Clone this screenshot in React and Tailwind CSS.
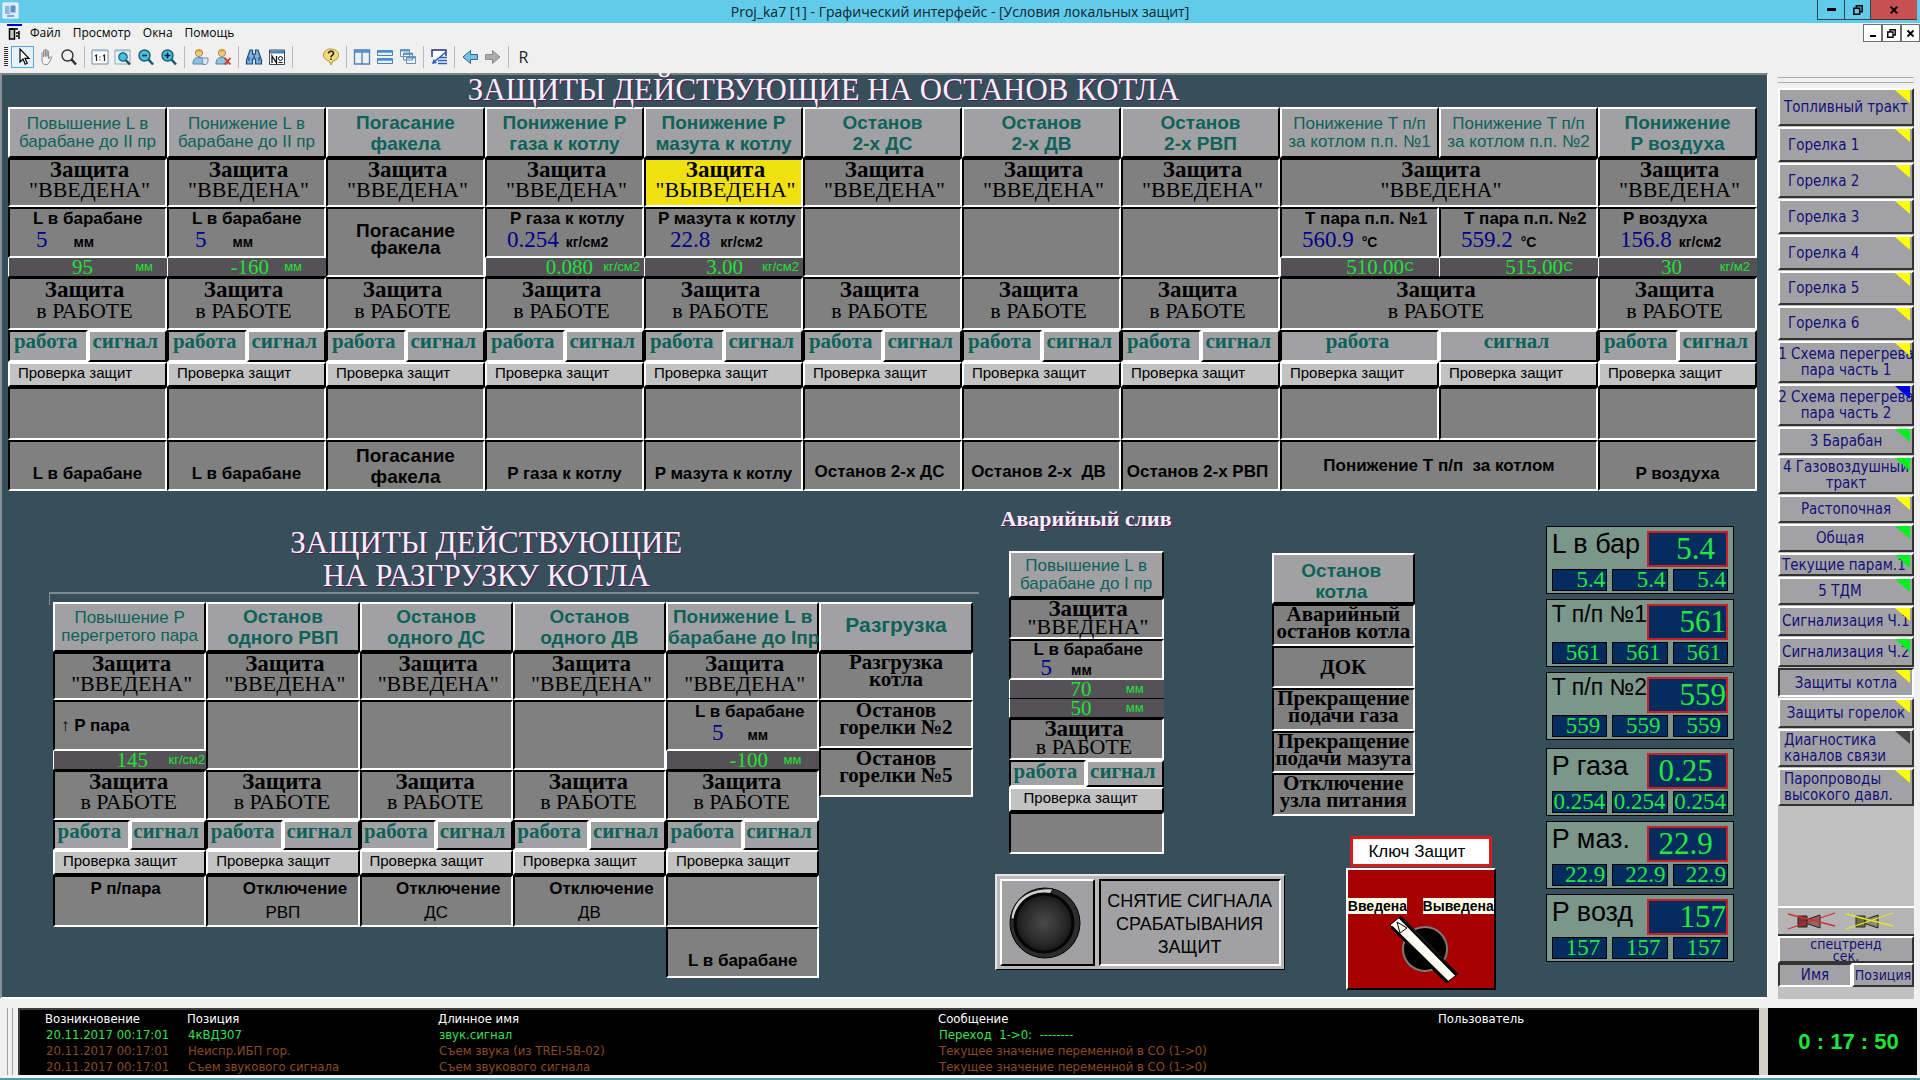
import React, { useState } from "react";

const SANS = "[font-family:'Liberation_Sans',Arial,sans-serif]";
const SERIF = "[font-family:'Liberation_Serif','Times_New_Roman',serif]";
const TAHOMA = "[font-family:'DejaVu_Sans_Condensed','DejaVu_Sans',sans-serif]";
const SEGOE = "[font-family:'Open_Sans','Noto_Sans',sans-serif]";

const SUNK =
  "border-2 border-t-black border-l-black border-b-white border-r-white bg-[#808080]";
const RAISED =
  "border-2 border-t-white border-l-white border-b-black border-r-black bg-[#a1a1a3]";
const TITLE =
  "text-[#f6effa] [text-shadow:1px_1px_0_#5c1450] whitespace-nowrap";

const stopColumns = [
  {
    head: "Повышение L в\nбарабане до II пр",
    small: true,
    name: "L в барабане",
    value: "5",
    unit: "мм",
    gap: "gap-[26px] pl-[26px]",
    set: "95",
    setEnd: "w-[84px]",
    setUnit: "мм",
    setPad: "pr-[14px]",
    foot: "L в барабане",
  },
  {
    head: "Понижение L в\nбарабане до II пр",
    small: true,
    name: "L в барабане",
    value: "5",
    unit: "мм",
    gap: "gap-[26px] pl-[26px]",
    set: "-160",
    setEnd: "w-[101px]",
    setUnit: "мм",
    setPad: "pr-[24px]",
    foot: "L в барабане",
  },
  { head: "Погасание\nфакела", label: "Погасание\nфакела" },
  {
    head: "Понижение P\nгаза к котлу",
    name: "P газа к котлу",
    value: "0.254",
    unit: "кг/см2",
    gap: "gap-[7px] pl-5",
    set: "0.080",
    setEnd: "w-[107px]",
    setUnit: "кг/см2",
    setPad: "pr-[4px]",
    foot: "P газа к котлу",
  },
  {
    head: "Понижение P\nмазута к котлу",
    off: true,
    name: "P мазута к котлу",
    long: true,
    value: "22.8",
    unit: "кг/см2",
    gap: "gap-[10px] pl-[24px]",
    set: "3.00",
    setEnd: "w-[98px]",
    setUnit: "кг/см2",
    setPad: "pr-[4px]",
    foot: "P мазута к котлу",
  },
  { head: "Останов\n2-х ДС", foot: "Останов 2-х ДС" },
  { head: "Останов\n2-х ДВ", foot: "Останов 2-х  ДВ" },
  { head: "Останов\n2-х РВП", foot: "Останов 2-х РВП" },
  {
    head: "Понижение T п/п\nза котлом п.п. №1",
    small: true,
    wide: true,
    name: "T пара п.п. №1",
    value: "560.9",
    unit: "°C",
    gap: "gap-[8px] pl-5",
    set: "510.00",
    setEnd: "w-[123px]",
    setUnit: "C",
    setPad: "pr-[25px]",
  },
  {
    head: "Понижение T п/п\nза котлом п.п. №2",
    small: true,
    wide: true,
    name: "T пара п.п. №2",
    value: "559.2",
    unit: "°C",
    gap: "gap-[8px] pl-5",
    set: "515.00",
    setEnd: "w-[123px]",
    setUnit: "C",
    setPad: "pr-[25px]",
  },
  {
    head: "Понижение\nP воздуха",
    name: "P воздуха",
    value: "156.8",
    unit: "кг/см2",
    gap: "gap-[7px] pl-5",
    set: "30",
    setEnd: "w-[83px]",
    setUnit: "кг/м2",
    setPad: "pr-[7px]",
    foot: "P воздуха",
  },
];

const unloadColumns = [
  { head: "Повышение P\nперегретого пара", small: true, foot: ["P п/пара"] },
  { head: "Останов\nодного РВП", foot: ["Отключение", "РВП"] },
  { head: "Останов\nодного ДС", foot: ["Отключение", "ДС"] },
  { head: "Останов\nодного ДВ", foot: ["Отключение", "ДВ"] },
  { head: "Понижение L в\nбарабане до Iпр", foot: null },
];

const meters = [
  { label: "L в бар", value: "5.4", pos: "justify-center pl-4", parts: "5.4" },
  { label: "T п/п №1", small: true, value: "561", pos: "justify-end", parts: "561", pad: true },
  { label: "T п/п №2", small: true, value: "559", pos: "justify-end", parts: "559", pad: true },
  { label: "P газа", value: "0.25", pos: "justify-center pr-1", parts: "0.254", first: true },
  { label: "P маз.", value: "22.9", pos: "justify-center pr-1", parts: "22.9" },
  { label: "P возд", value: "157", pos: "justify-end", parts: "157", pad: true },
];

const YELLOW = "bg-[#ffff00]";
const GREEN = "bg-[#00f020]";
const BLUE = "bg-[#0000e0]";
const DARK = "bg-[#444444]";

const LEFT = "items-start pl-2";
const TIGHT = "items-start pl-[2px]";
const OFFSET = "items-center pr-3";

const screens = [
  { text: "Топливный тракт", h: "h-[38px]", flag: YELLOW },
  { text: "Горелка 1", h: "h-[35px]", flag: YELLOW, align: LEFT },
  { text: "Горелка 2", h: "h-[35px]", flag: YELLOW, align: LEFT },
  { text: "Горелка 3", h: "h-[35px]", flag: YELLOW, align: LEFT },
  { text: "Горелка 4", h: "h-[35px]", flag: YELLOW, align: LEFT },
  { text: "Горелка 5", h: "h-[34px]", flag: YELLOW, align: LEFT },
  { text: "Горелка 6", h: "h-[34px]", flag: YELLOW, align: LEFT },
  { text: "1 Схема перегрева\nпара часть 1", h: "h-[42px]", flag: YELLOW },
  { text: "2 Схема перегрева\nпара часть 2", h: "h-[42px]", flag: BLUE },
  { text: "3 Барабан", h: "h-[28px]", flag: GREEN },
  { text: "4 Газовоздушный\nтракт", h: "h-[38px]", flag: GREEN },
  { text: "Растопочная", h: "h-[28px]", flag: YELLOW },
  { text: "Общая", h: "h-[28px]", flag: GREEN, align: OFFSET },
  { text: "Текущие парам.1", h: "h-[23px]", flag: GREEN, align: TIGHT },
  { text: "5 ТДМ", h: "h-[28px]", flag: GREEN, align: OFFSET },
  { text: "Сигнализация Ч.1", h: "h-[30px]", flag: YELLOW, align: TIGHT },
  { text: "Сигнализация Ч.2", h: "h-[30px]", flag: GREEN, align: TIGHT },
  { text: "Защиты котла", h: "h-[29px]", flag: YELLOW },
  { text: "Защиты горелок", h: "h-[30px]", flag: YELLOW },
  { text: "Диагностика\nканалов связи", h: "h-[38px]", flag: DARK, align: "items-start pl-1 text-left" },
  { text: "Паропроводы\nвысокого давл.", h: "h-[38px]", flag: YELLOW, align: "items-start pl-1 text-left" },
];

const events = [
  {
    color: "text-[#35e04a]",
    cells: ["20.11.2017 00:17:01", "4кВД307", "звук.сигнал", "Переход  1->0:  --------"],
  },
  {
    color: "text-[#8a4a26]",
    cells: [
      "20.11.2017 00:17:01",
      "Неиспр.ИБП гор.",
      "Съем звука (из TREI-5B-02)",
      "Текущее значение переменной в СО (1->0)",
    ],
  },
  {
    color: "text-[#8a4a26]",
    cells: [
      "20.11.2017 00:17:01",
      "Съем звукового сигнала",
      "Съем звукового сигнала",
      "Текущее значение переменной в СО (1->0)",
    ],
  },
];

/* ---------- icons ---------- */

const Svg = ({ children, size = 18 }) => (
  <svg width={size} height={size} viewBox="0 0 18 18" fill="none" aria-hidden="true">
    {children}
  </svg>
);

const CursorIcon = () => (
  <Svg>
    <path d="M6 1v13l3-3 2.2 5.2 2-.9L11 10.3h4z" fill="#fff" stroke="#000" strokeWidth="1.2" />
  </Svg>
);
const HandIcon = () => (
  <Svg>
    <path
      d="M5 11V5.5c0-1.2 1.6-1.2 1.6 0V9 3c0-1.3 1.7-1.3 1.7 0v5.5V2.3c0-1.3 1.7-1.3 1.7 0v6.2V3.6c0-1.2 1.6-1.2 1.6 0V11l1.5-2c.8-1 2 0 1.5 1l-2.4 4.5c-.6 1.3-1.6 2.2-3.2 2.2-3 0-4-1.7-4-5.7z"
      fill="#f4f4f4"
      stroke="#8c8c8c"
    />
  </Svg>
);
const LensIcon = ({ fill = "none", color = "#333", children }) => (
  <Svg>
    <circle cx="7.5" cy="7.5" r="5.5" fill={fill} stroke={color} strokeWidth="1.4" />
    <path d="M11.5 11.5 16 16.5" stroke={color} strokeWidth="2.6" />
    {children}
  </Svg>
);
const OneToOneIcon = () => (
  <Svg>
    <path d="M1 2h16v14H1z" fill="#fff" stroke="#7c8a90" />
    <path d="M1 2.5h16" stroke="#9fc4d8" strokeWidth="2" />
    <path d="M4 8l1.5-1v6M12 8l1.5-1v6M9 8.5v1M9 11.5v1" stroke="#222" strokeWidth="1.2" />
  </Svg>
);
const FitIcon = () => (
  <Svg>
    <path d="M1 2h15v14H1z" fill="#e9f3f6" stroke="#8fa9b0" />
    <path d="M1 2.5h15" stroke="#9fc4d8" strokeWidth="2" />
    <circle cx="9" cy="9" r="4.2" fill="#46c0e0" stroke="#1f5a70" strokeWidth="1.2" />
    <path d="M12 12.5l4 4" stroke="#1f4858" strokeWidth="2.4" />
  </Svg>
);
const UserIcon = ({ removed }) => (
  <Svg>
    <circle cx="8" cy="5" r="3.6" fill="#efc98b" stroke="#b98a3e" />
    <path d="M4.5 4.5C5 0 11 0 11.5 4.5 9.5 3 7 3 4.5 4.5z" fill="#d9a441" />
    <path d="M2 16c0-5 2-6.5 6-6.5s6 1.5 6 6.5z" fill="#8fc3dd" stroke="#4d87a8" />
    {removed ? (
      <path d="M10.5 10l6 6.5M16.5 10l-6 6.5" stroke="#d8342a" strokeWidth="1.8" />
    ) : (
      <path d="M11 10h6v4l-2 2.5h-3z" fill="#d6e6f2" stroke="#6c8fb0" />
    )}
  </Svg>
);
const BinocularsIcon = () => (
  <Svg>
    <path
      d="M5 2h2.5v4h3V2H13l3.500 10v4h-6v-5h-3v5h-6v-4z"
      fill="#7fb0d8"
      stroke="#1d4b80"
      strokeWidth="1.2"
    />
    <path d="M4 9v4M14 9v4M9 6v5" stroke="#1d4b80" strokeWidth="1.2" />
  </Svg>
);
const NumberIcon = () => (
  <Svg>
    <path d="M1.5 2h15v14.5h-15z" fill="#fff" stroke="#3a4a58" />
    <path d="M2 4h14" stroke="#4c82b0" strokeWidth="3" />
    <path d="M4 15V8l4.5 7V8" stroke="#111" strokeWidth="1.3" />
    <circle cx="12.5" cy="10.5" r="2" stroke="#111" />
    <path d="M10.5 14.5h4" stroke="#111" />
  </Svg>
);
const HelpIcon = () => (
  <Svg>
    <path
      d="M9 1C4.5 1 1.5 3.5 1.5 7c0 3.5 3 5.5 5.5 6l2 4 2-4c3-.5 5.5-2.500 5.500-6 0-3.500-3-6-7.500-6z"
      fill="#f2dc7c"
      stroke="#b0973c"
    />
    <path
      d="M6.5 5.5C6.5 2.5 11.5 2.7 11.5 5.5 11.5 7.5 9 7.3 9 9.2M9 10.5v1.5"
      stroke="#222"
      strokeWidth="1.6"
    />
  </Svg>
);
const ColumnsIcon = () => (
  <Svg>
    <path d="M1.5 2h15v14h-15zM9 2v14" fill="#eaf3fb" stroke="#4f7fae" strokeWidth="1.3" />
    <path d="M1.5 3.5h15" stroke="#4f8fd0" strokeWidth="2.5" />
  </Svg>
);
const RowsIcon = () => (
  <Svg>
    <path d="M1.5 2.5h15v5h-15zM1.5 10.5h15v5h-15z" fill="#eaf3fb" stroke="#4f7fae" />
    <path d="M1.5 3.5h15M1.5 11.5h15" stroke="#4f8fd0" strokeWidth="2.5" />
  </Svg>
);
const CascadeIcon = () => (
  <Svg>
    <path
      d="M1.5 1.5h9v7h-9zM4.500 5h9v7h-9zM7.500 8.500h9v7h-9z"
      fill="#f4f9fd"
      stroke="#6f8fae"
    />
    <path d="M1.5 2.5h9M4.5 6h9M7.5 9.5h9" stroke="#5a96d0" strokeWidth="2" />
  </Svg>
);
const SwapIcon = () => (
  <Svg>
    <path d="M2 9V2h14v6" fill="#fff" stroke="#1c2e70" strokeWidth="1.4" />
    <path d="M16 4 4 14" stroke="#2a5fc0" strokeWidth="1.6" />
    <path d="M2 16l1.500-5 3.500 4z" fill="#2a5fc0" />
    <path d="M10 9.500h7M8 12.500h9M8 15.500h9" stroke="#2a5fc0" strokeWidth="1.600" />
  </Svg>
);
const ArrowIcon = ({ forward }) => (
  <Svg>
    {forward ? (
      <path d="M1.5 6.5h7v-4L16 9l-7.5 6.5v-4h-7z" fill="#ababab" stroke="#8a8a8a" />
    ) : (
      <path d="M16.5 6.5h-7v-4L2 9l7.5 6.5v-4h7z" fill="#78bfe6" stroke="#2c6a98" />
    )}
  </Svg>
);
const AppIcon = () => (
  <Svg>
    <path d="M1 1h15v15H1z" fill="#dcebf5" stroke="#f4f8fb" />
    <path d="M3 4h6v8H3z" fill="#8fb6dc" />
    <path d="M8 3h6v8H8z" fill="#5b92cc" stroke="#e8f2fa" />
    <path d="M5 14h7" stroke="#7ea6cc" strokeWidth="2" />
  </Svg>
);
const DocIcon = () => (
  <svg width="16" height="18" viewBox="0 0 16 18" fill="none" aria-hidden="true">
    <path d="M0 1h15" stroke="#0000c0" strokeWidth="2" />
    <path d="M2.5 5v10h5V5z" fill="#c8c8c8" stroke="#000" strokeWidth="1.5" />
    <path d="M2 5h9M9 9h3V7M12 9v6M9 12h2" stroke="#000" strokeWidth="1.5" />
  </svg>
);

const MinGlyph = () => <span className="block h-[3px] w-[9px] bg-black" />;
const RestoreGlyph = ({ size }) => (
  <svg
    width={size}
    height={size}
    viewBox="0 0 12 12"
    fill="none"
    stroke="#000"
    strokeWidth="1.8"
    aria-hidden="true"
  >
    <path d="M1 4h7v7H1zM4 3.5V1h7v7H8.5" />
  </svg>
);
const CloseGlyph = ({ size }) => (
  <svg
    width={size}
    height={size}
    viewBox="0 0 12 12"
    stroke="#000"
    strokeWidth="2.4"
    aria-hidden="true"
  >
    <path d="M2 2l8 8M10 2l-8 8" />
  </svg>
);

const SirenIcon = ({ body, cross }) => (
  <svg width="50" height="18" viewBox="0 0 50 18" fill="none" aria-hidden="true">
    <path d="M11 4h9v11h-9z" fill={body} stroke="#222" />
    <path d="M20 7.5 33 3v13l-13-4.5z" fill={body} fillOpacity="0.6" stroke="#222" />
    <path d="M1 2 48 14M1 17 48 1" stroke={cross} strokeWidth="1.3" />
  </svg>
);

/* ---------- table pieces ---------- */

const Guard = ({ state, leading = "leading-[20px]", pad = "" }) => (
  <div className={`${leading} ${pad}`}>
    <div className="text-[23px] font-bold">Защита</div>
    <div className="text-[22px]">{state}</div>
  </div>
);

const HeadText = ({ text, small }) => (
  <div
    className={
      small
        ? "text-[17px] leading-[18px] font-normal whitespace-pre text-[#0e625a]"
        : "text-[19px] leading-[21px] font-bold whitespace-pre text-[#0e625a]"
    }
  >
    {text}
  </div>
);

const Reading = ({ col, tight }) => (
  <div className={`${SANS} text-left whitespace-nowrap`}>
    <div
      className={`text-[17px] font-bold ${tight ? "leading-[18px]" : "leading-[19px]"} ${
        col.long ? "pl-[12px]" : "pl-[23px]"
      }`}
    >
      {col.name}
    </div>
    <div className={`flex items-baseline ${col.gap}`}>
      <span
        className={`${SERIF} text-[23px] text-[#00008c] ${tight ? "leading-[18px]" : "leading-[24px]"}`}
      >
        {col.value}
      </span>
      <span className={`text-[14px] font-bold ${tight ? "leading-[16px]" : "leading-[24px]"}`}>
        {col.unit}
      </span>
    </div>
  </div>
);

const Setpoint = ({ col }) => (
  <div
    className={`flex h-[19px] items-center border-b border-l border-b-black border-l-white bg-[#545256] text-[#22e038] ${col.setPad}`}
  >
    <span className={`${SERIF} shrink-0 text-right text-[21px] leading-[18px] ${col.setEnd}`}>
      {col.set}
    </span>
    <span className={`${SANS} ml-auto text-[13px] leading-[18px]`}>{col.setUnit}</span>
  </div>
);

const ModeButton = ({ children, pressed, onClick, h }) => (
  <button
    type="button"
    aria-pressed={pressed}
    onClick={onClick}
    className={`${SERIF} ${h} flex w-full justify-center border-2 bg-[#a1a1a3] pr-1 text-[21px] leading-[18px] font-bold text-[#0e625a] ${
      pressed
        ? "border-t-black border-l-black border-b-white border-r-white"
        : "border-t-white border-l-white border-b-black border-r-black"
    }`}
  >
    {children}
  </button>
);

const ModePair = ({ h }) => {
  const [mode, setMode] = useState("work");
  return (
    <div className="grid grid-cols-2">
      <ModeButton h={h} pressed={mode === "work"} onClick={() => setMode("work")}>
        работа
      </ModeButton>
      <ModeButton h={h} pressed={mode === "signal"} onClick={() => setMode("signal")}>
        сигнал
      </ModeButton>
    </div>
  );
};

const CheckButton = ({ pad = "pl-[8px]" }) => (
  <button
    type="button"
    className={`${SANS} ${pad} block h-[25px] w-full border-2 border-t-white border-l-white border-b-black border-r-black bg-[#c2c2c2] pb-[3px] text-left text-[15px] leading-[18px] text-black`}
  >
    Проверка защит
  </button>
);

const StopTable = () => (
  <table
    className={`${SERIF} w-full table-fixed border-separate border-spacing-0 text-center text-black`}
  >
    <thead>
      <tr>
        {stopColumns.map((col, i) => (
          <th key={i} scope="col" className={`${RAISED} ${SANS} h-[51px] p-0`}>
            <HeadText text={col.head} small={col.small} />
          </th>
        ))}
      </tr>
    </thead>
    <tbody>
      <tr>
        {stopColumns.map((col, i) =>
          i === 9 ? null : (
            <td
              key={i}
              colSpan={col.wide ? 2 : 1}
              className={
                col.off
                  ? "h-[49px] border-2 border-t-black border-l-black border-r-white border-b-white bg-[#f0e010] p-0 align-top"
                  : `${SUNK} h-[49px] p-0 align-top`
              }
            >
              <Guard state={col.off ? '"ВЫВЕДЕНА"' : '"ВВЕДЕНА"'} pad="pl-[4px]" />
            </td>
          )
        )}
      </tr>
      <tr>
        {stopColumns.map((col, i) => (
          <td
            key={i}
            rowSpan={col.name ? 1 : 2}
            className={`${SUNK} h-[51px] p-0 ${col.name ? "align-top" : "align-middle"}`}
          >
            {col.name && <Reading col={col} />}
            {col.label && (
              <div className={`${SANS} pb-1.5 text-[19px] leading-[17px] font-bold whitespace-pre`}>
                {col.label}
              </div>
            )}
          </td>
        ))}
      </tr>
      <tr>
        {stopColumns
          .filter((col) => col.name)
          .map((col, i) => (
            <td key={i} className="p-0">
              <Setpoint col={col} />
            </td>
          ))}
      </tr>
      <tr>
        {stopColumns.map((col, i) =>
          i === 9 ? null : (
            <td key={i} colSpan={col.wide ? 2 : 1} className={`${SUNK} h-[53px] p-0 align-top`}>
              <Guard state="в РАБОТЕ" leading="leading-[21px]" pad="pr-[6px]" />
            </td>
          )
        )}
      </tr>
      <tr>
        {stopColumns.map((col, i) => (
          <td key={i} className="p-0">
            {col.wide ? (
              <ModeButton h="h-[32px]" pressed={i === 8}>
                {i === 8 ? "работа" : "сигнал"}
              </ModeButton>
            ) : (
              <ModePair h="h-[32px]" />
            )}
          </td>
        ))}
      </tr>
      <tr>
        {stopColumns.map((col, i) => (
          <td key={i} className="p-0">
            <CheckButton />
          </td>
        ))}
      </tr>
      <tr>
        {stopColumns.map((col, i) => (
          <td key={i} className={`${SUNK} h-[53px] p-0`} />
        ))}
      </tr>
      <tr className={`${SANS} text-[17px] font-bold whitespace-pre`}>
        {stopColumns.map((col, i) => {
          if (i === 9) return null;
          if (col.wide)
            return (
              <td key={i} colSpan={2} className={`${SUNK} h-[51px] p-0`}>
                Понижение T п/п  за котлом
              </td>
            );
          if (col.label)
            return (
              <td key={i} className={`${SUNK} h-[51px] p-0 text-[19px] leading-[21px]`}>
                {col.label}
              </td>
            );
          return (
            <td key={i} className={`${SUNK} h-[51px] p-0 ${col.name ? "pt-4" : "pt-3 pr-1.5"}`}>
              {col.foot}
            </td>
          );
        })}
      </tr>
    </tbody>
  </table>
);

const unloadSteam = { set: "145", setEnd: "w-[94px]", setUnit: "кг/см2", setPad: "pr-px" };
const unloadLevel = {
  name: "L в барабане",
  value: "5",
  unit: "мм",
  gap: "gap-[24px] pl-[40px]",
  set: "-100",
  setEnd: "w-[101px]",
  setUnit: "мм",
  setPad: "pr-[18px]",
};

const UnloadTable = () => (
  <table
    className={`${SERIF} w-full table-fixed border-separate border-spacing-0 text-center text-black`}
  >
    <thead>
      <tr>
        {unloadColumns.map((col, i) => (
          <th key={i} scope="col" className={`${RAISED} ${SANS} h-[50px] p-0`}>
            <HeadText text={col.head} small={col.small} />
          </th>
        ))}
      </tr>
    </thead>
    <tbody>
      <tr>
        {unloadColumns.map((col, i) => (
          <td key={i} className={`${SUNK} h-[48px] p-0 align-top`}>
            <Guard state={'"ВВЕДЕНА"'} pad="pl-[4px]" />
          </td>
        ))}
      </tr>
      <tr>
        <td className={`${SUNK} ${SANS} h-[51px] p-0 pl-1.5 text-left text-[17px] font-bold`}>
          <span className="font-normal">↑</span> P пара
        </td>
        <td rowSpan={2} className={`${SUNK} p-0`} />
        <td rowSpan={2} className={`${SUNK} p-0`} />
        <td rowSpan={2} className={`${SUNK} p-0`} />
        <td className={`${SUNK} h-[51px] p-0 pl-1 align-top`}>
          <Reading col={unloadLevel} />
        </td>
      </tr>
      <tr>
        <td className="p-0">
          <Setpoint col={unloadSteam} />
        </td>
        <td className="p-0">
          <Setpoint col={unloadLevel} />
        </td>
      </tr>
      <tr>
        {unloadColumns.map((col, i) => (
          <td key={i} className={`${SUNK} h-[50px] p-0 align-top`}>
            <Guard state="в РАБОТЕ" pad="pr-[2px]" />
          </td>
        ))}
      </tr>
      <tr>
        {unloadColumns.map((col, i) => (
          <td key={i} className="p-0">
            <ModePair h="h-[30px]" />
          </td>
        ))}
      </tr>
      <tr>
        {unloadColumns.map((col, i) => (
          <td key={i} className="p-0">
            <CheckButton />
          </td>
        ))}
      </tr>
      <tr className={`${SANS} text-[17px] leading-[24px] font-bold`}>
        {unloadColumns.map((col, i) => (
          <td key={i} className={`${SUNK} h-[52px] p-0 align-top`}>
            {col.foot && <div className={i === 0 ? "pr-2" : "pl-6"}>{col.foot[0]}</div>}
            {col.foot && <div className="font-normal">{col.foot[1]}</div>}
          </td>
        ))}
      </tr>
      <tr className={`${SANS} text-[17px] font-bold`}>
        <td colSpan={4} className="p-0" />
        <td className={`${SUNK} h-[51px] p-0 pt-4`}>L в барабане</td>
      </tr>
    </tbody>
  </table>
);

const ListCell = ({ text, h, align = "items-start" }) => (
  <li
    className={`${SUNK} ${SERIF} ${h} ${align} flex justify-center text-center text-[21px] leading-[17px] font-bold whitespace-pre text-black`}
  >
    {text}
  </li>
);

const drainLevel = {
  name: "L в барабане",
  value: "5",
  unit: "мм",
  gap: "gap-[19px] pl-[30px]",
};

const DrainColumn = () => (
  <section className="flex w-[155px] flex-col items-center pt-4">
    <h2 className={`${SERIF} ${TITLE} mb-5 text-[22px] leading-[24px] font-bold`}>
      Аварийный слив
    </h2>
    <div className={`${SERIF} w-full text-center text-black`}>
      <div className={`${RAISED} ${SANS} flex h-[47px] items-center justify-center`}>
        <HeadText text={"Повышение L в\nбарабане до I пр"} small />
      </div>
      <div className={`${SUNK} h-[41px]`}>
        <Guard state={'"ВВЕДЕНА"'} leading="leading-[18px]" pad="pl-[4px]" />
      </div>
      <div className={`${SUNK} h-[41px]`}>
        <Reading col={drainLevel} tight />
      </div>
      {["70", "50"].map((v) => (
        <Setpoint
          key={v}
          col={{ set: v, setEnd: "w-[82px]", setUnit: "мм", setPad: "pr-[20px]" }}
        />
      ))}
      <div className={`${SUNK} h-[42px]`}>
        <Guard state="в РАБОТЕ" leading="leading-[18px]" pad="pr-[4px]" />
      </div>
      <ModePair h="h-[27px]" />
      <CheckButton pad="pl-[13px]" />
      <div className={`${SUNK} h-[42px]`} />
    </div>
  </section>
);

const BoilerStopColumn = () => (
  <section className="w-[143px] pt-[62px]">
    <h2
      className={`${RAISED} ${SANS} flex h-[51px] items-center justify-center pt-1 pr-1 text-center`}
    >
      <HeadText text={"Останов\nкотла"} />
    </h2>
    <ul>
      <ListCell h="h-[42px]" text={"Аварийный\nостанов котла"} />
      <ListCell h="h-[42px]" align="items-center" text="ДОК" />
      <ListCell h="h-[43px]" text={"Прекращение\nподачи газа"} />
      <ListCell h="h-[42px]" text={"Прекращение\nподачи мазута"} />
      <ListCell h="h-[43px]" text={"Отключение\nузла питания"} />
    </ul>
  </section>
);

const ResetButton = () => (
  <button
    type="button"
    className="flex h-[96px] w-[290px] gap-1 border-t-2 border-r border-b border-l-2 border-t-[#e4e4e4] border-l-[#e4e4e4] border-r-black border-b-black bg-[#b9b9bb] p-[3px]"
  >
    <span className={`${RAISED} flex h-full w-[95px] items-center justify-center pr-1`}>
      <svg width="74" height="74" viewBox="0 0 74 74" aria-hidden="true">
        <defs>
          <radialGradient id="knob">
            <stop offset="0" stopColor="#4a4a4a" />
            <stop offset="0.7" stopColor="#2a2a2a" />
            <stop offset="1" stopColor="#161616" />
          </radialGradient>
        </defs>
        <circle cx="37" cy="37" r="35" fill="#2c2c2e" stroke="#000" />
        <path
          d="M3 33C4 15 20 1 45 3L42 8C24 5 9 15 6 33z"
          fill="#cfcfcf"
          stroke="#000"
          strokeWidth="0.8"
        />
        <circle cx="36" cy="37" r="29" fill="url(#knob)" stroke="#050505" strokeWidth="3" />
      </svg>
    </span>
    <span
      className={`${SANS} flex h-full flex-1 items-center justify-center border-2 border-t-black border-l-black border-b-white border-r-white bg-[#a1a1a3] pt-[4px] text-[18px] leading-[23px] whitespace-pre text-black`}
    >
      {"СНЯТИЕ СИГНАЛА\nСРАБАТЫВАНИЯ\nЗАЩИТ"}
    </span>
  </button>
);

const ProtectionKey = () => (
  <section className={`${SANS} -mt-[38px] w-[150px] text-black`}>
    <h2 className="mx-1 flex h-[31px] items-center justify-center border-[3px] border-[#d81c1c] bg-white pr-2 text-[17px]">
      Ключ Защит
    </h2>
    <button
      type="button"
      className="relative mt-px block h-[122px] w-full border-2 border-t-white border-l-white border-b-black border-r-black bg-[#a60000]"
    >
      <svg
        className="absolute inset-0"
        width="146"
        height="118"
        viewBox="0 0 146 118"
        aria-hidden="true"
      >
        <circle cx="77" cy="79" r="22" fill="#000" stroke="#7a7a7a" strokeWidth="2" />
        <path d="M42 55 53 46 110 104 98 113z" fill="#fffdf2" stroke="#000" />
        <path d="M43.5 57 99.5 112M51.5 47 108.5 105" stroke="#000" strokeWidth="3" />
        <path d="M49 52 52 63 59 58z" fill="none" stroke="#000" />
      </svg>
      <span className="absolute inset-x-0 top-[28px] flex justify-between text-[14px] leading-[16px] font-bold">
        <span className="bg-[#fffbe8]">Введена</span>
        <span className="bg-[#fffbe8]">Выведена</span>
      </span>
    </button>
  </section>
);

const Meter = ({ meter }) => (
  <article
    className={`h-[68px] border border-black bg-[#7b968b] px-[5px] pt-[4px] text-black ${
      meter.first ? "mt-[3px]" : ""
    }`}
  >
    <div className="flex justify-between">
      <h3
        className={`${SANS} whitespace-nowrap ${
          meter.small ? "text-[23px] leading-[20px]" : "text-[27px] leading-[26px]"
        }`}
      >
        {meter.label}
      </h3>
      <div
        className={`${SERIF} ${meter.pos} flex h-[36px] w-[81px] shrink-0 items-center border-2 border-[#d01c24] bg-[#052c5e] text-[31px] leading-[32px] text-[#20e83c]`}
      >
        {meter.value}
      </div>
    </div>
    <div className="mt-[2px] grid grid-cols-3 gap-[5px]">
      {[0, 1, 2].map((i) => (
        <div
          key={i}
          className={`${SERIF} flex h-[22px] items-center justify-end border border-black bg-[#052c5e] text-[23px] leading-[20px] text-[#20e83c] ${
            meter.pad ? "pr-1.5" : "pr-px"
          }`}
        >
          {meter.parts}
        </div>
      ))}
    </div>
  </article>
);

const ScreenButton = ({ screen, current, onClick }) => (
  <button
    type="button"
    aria-current={current ? "page" : undefined}
    onClick={onClick}
    className={`relative flex shrink-0 flex-col justify-center border-2 bg-[#a2a2a4] text-[15px] leading-[16px] whitespace-pre text-[#14107a] ${
      screen.h
    } ${screen.align || "items-center"} ${
      current
        ? "border-t-[#333333] border-l-[#333333] border-b-white border-r-white"
        : "border-t-white border-l-white border-b-[#333333] border-r-[#333333]"
    }`}
  >
    <span>{screen.text}</span>
    <span
      className={`absolute top-0 right-[2px] h-[13px] w-[15px] [clip-path:polygon(0_0,100%_0,100%_100%)] ${screen.flag}`}
    />
  </button>
);

const Sidebar = () => {
  const [current, setCurrent] = useState(17);
  return (
    <nav className={`${TAHOMA} mr-[6px] ml-[10px] flex w-[136px] shrink-0 flex-col bg-[#c0c0c0]`}>
      <div className="h-[15px] bg-[#f0f0f0] pt-1">
        <div className="h-[6px] border-y border-[#a8a8b0]" />
      </div>
      <div className="flex flex-col gap-px">
        {screens.map((screen, i) => (
          <ScreenButton
            key={screen.text}
            screen={screen}
            current={i === current}
            onClick={() => setCurrent(i)}
          />
        ))}
      </div>
      <div className="mt-auto mb-3 text-[15px] text-[#14107a]">
        <div className="grid h-[30px] grid-cols-2 place-items-center border-t-2 border-b-2 border-t-white border-b-[#333333] bg-[#b4b4b4]">
          <button type="button" aria-label="Отключить сирену">
            <SirenIcon body="#7a3434" cross="#d03030" />
          </button>
          <button type="button" aria-label="Отключить звонок" className="pr-5">
            <SirenIcon body="#6c6c40" cross="#e6e62a" />
          </button>
        </div>
        <button
          type="button"
          className="block h-[27px] w-full border-2 border-t-white border-l-white border-b-[#333333] border-r-[#333333] bg-[#a2a2a4] pb-1 text-[14px] leading-[12px] whitespace-pre"
        >
          {"спецтренд\nсек."}
        </button>
        <div className="grid grid-cols-[74fr_62fr]">
          <button
            type="button"
            aria-pressed="true"
            className="h-[24px] border-2 border-t-[#333333] border-l-[#333333] border-b-white border-r-white bg-[#a2a2a4] leading-[18px]"
          >
            Имя
          </button>
          <button
            type="button"
            className="h-[24px] border-2 border-t-white border-l-white border-b-[#333333] border-r-[#333333] bg-[#a2a2a4] text-[14px] leading-[18px]"
          >
            Позиция
          </button>
        </div>
      </div>
    </nav>
  );
};

/* ---------- window chrome ---------- */

const Tool = ({ label, active, children }) => (
  <button
    type="button"
    aria-label={label}
    className={`flex h-[22px] w-[23px] items-center justify-center ${
      active ? "border border-[#5aa7dc] bg-[#e6f2fb]" : ""
    }`}
  >
    {children}
  </button>
);

const Sep = () => <span className="mr-[3px] ml-[4px] h-[22px] w-px bg-[#b8b8b8]" />;

const TitleBar = () => (
  <header className={`${SEGOE} flex h-[23px] items-start bg-[#61cbe9] text-[#0d2530]`}>
    <div className="flex w-[103px] pt-[2px] pl-[2px]">
      <AppIcon />
    </div>
    <h1 className="flex-1 text-center text-[14px] leading-[23px] whitespace-nowrap">
      Proj_ka7 [1] - Графический интерфейс - [Условия локальных защит]
    </h1>
    <div className="mr-[3px] flex h-[20px]">
      <button
        type="button"
        aria-label="Свернуть"
        className="flex w-[28px] items-center justify-center border border-t-0 border-[#2e4a55]"
      >
        <MinGlyph />
      </button>
      <button
        type="button"
        aria-label="Восстановить"
        className="flex w-[26px] items-center justify-center border-r border-b border-[#2e4a55]"
      >
        <RestoreGlyph size={10} />
      </button>
      <button
        type="button"
        aria-label="Закрыть"
        className="flex w-[46px] items-center justify-center border-b border-[#5c2a26] bg-[#c75050]"
      >
        <CloseGlyph size={10} />
      </button>
    </div>
  </header>
);

const MenuBar = () => (
  <div className={`${SEGOE} flex h-[20px] items-center bg-[#f0f0f0] text-[12px] text-black`}>
    <span className="ml-[7px]">
      <DocIcon />
    </span>
    <nav className="ml-[7px] flex gap-3">
      <button type="button">Файл</button>
      <button type="button">Просмотр</button>
      <button type="button">Окна</button>
      <button type="button">Помощь</button>
    </nav>
    <div className="ml-auto flex">
      {["Свернуть окно", "Восстановить окно", "Закрыть окно"].map((label, i) => (
        <button
          key={label}
          type="button"
          aria-label={label}
          className="flex h-[18px] w-[19px] items-center justify-center border border-[#707070] bg-white"
        >
          {i === 0 && <span className="mt-1.5 block h-[2px] w-[6px] bg-black" />}
          {i === 1 && <RestoreGlyph size={9} />}
          {i === 2 && <CloseGlyph size={9} />}
        </button>
      ))}
    </div>
  </div>
);

const ToolBar = () => (
  <div className="flex h-[30px] items-center bg-[#f0f0f0] pb-[2px] pl-[4px]">
    <span className="mr-[3px] h-[20px] w-[4px] bg-[repeating-linear-gradient(#333_0_1px,#f0f0f0_1px_2px)]" />
    <Tool label="Выбор" active>
      <CursorIcon />
    </Tool>
    <Tool label="Рука">
      <HandIcon />
    </Tool>
    <Tool label="Лупа">
      <LensIcon />
    </Tool>
    <Sep />
    <Tool label="Масштаб 1:1">
      <OneToOneIcon />
    </Tool>
    <Tool label="Вписать">
      <FitIcon />
    </Tool>
    <Tool label="Уменьшить">
      <LensIcon fill="#46c0e0" color="#1f5a70">
        <path d="M5 7.5h5" stroke="#123" strokeWidth="1.6" />
      </LensIcon>
    </Tool>
    <Tool label="Увеличить">
      <LensIcon fill="#46c0e0" color="#1f5a70">
        <path d="M4.5 7.5h6M7.5 4.5v6" stroke="#123" strokeWidth="1.6" />
      </LensIcon>
    </Tool>
    <Sep />
    <Tool label="Пользователь">
      <UserIcon />
    </Tool>
    <Tool label="Выход пользователя">
      <UserIcon removed />
    </Tool>
    <Sep />
    <Tool label="Поиск">
      <BinocularsIcon />
    </Tool>
    <Tool label="Номер">
      <NumberIcon />
    </Tool>
    <Sep />
    <span className="w-[23px]" />
    <Tool label="Справка">
      <HelpIcon />
    </Tool>
    <Sep />
    <Tool label="Слева направо">
      <ColumnsIcon />
    </Tool>
    <Tool label="Сверху вниз">
      <RowsIcon />
    </Tool>
    <Tool label="Каскад">
      <CascadeIcon />
    </Tool>
    <Sep />
    <Tool label="Переключить">
      <SwapIcon />
    </Tool>
    <Sep />
    <Tool label="Назад">
      <ArrowIcon />
    </Tool>
    <Tool label="Вперёд">
      <ArrowIcon forward />
    </Tool>
    <Sep />
    <Tool label="Отчёт">
      <span className={`${SEGOE} text-[16px] leading-[20px] text-[#222222]`}>R</span>
    </Tool>
  </div>
);

const EventLog = () => (
  <footer className="flex h-[67px] bg-[#f0f0f0]">
    <div className="mr-[5px] ml-[7px] w-[6px] border-x border-[#a0a0a0]" />
    <div
      className={`${TAHOMA} min-w-0 flex-1 border-t-2 border-l-2 border-[#3c3c3c] bg-black pt-px`}
    >
      <table className="w-full table-fixed border-separate border-spacing-0 text-left text-[13px] leading-[16px] whitespace-pre">
        <colgroup>
          <col className="w-[167px]" />
          <col className="w-[251px]" />
          <col className="w-[500px]" />
          <col className="w-[500px]" />
          <col />
        </colgroup>
        <thead>
          <tr className="text-white">
            {["Возникновение", "Позиция", "Длинное имя", "Сообщение", "Пользователь"].map(
              (t, i) => (
                <th
                  key={t}
                  scope="col"
                  className={i === 0 ? "p-0 pl-[25px] font-normal" : "p-0 font-normal"}
                >
                  {t}
                </th>
              )
            )}
          </tr>
        </thead>
        <tbody>
          {events.map((row, r) => (
            <tr key={r} className={row.color}>
              {row.cells.map((cell, i) => (
                <td key={i} className={i === 0 ? "p-0 pl-[26px]" : "p-0 pl-px"}>
                  {cell}
                </td>
              ))}
            </tr>
          ))}
        </tbody>
      </table>
    </div>
    <div className="w-[9px] bg-[#d4d0c8]" />
    <div
      className={`${SANS} mr-[3px] flex w-[149px] items-center justify-center bg-black pl-3 text-[22px] font-bold text-[#1fe43a]`}
    >
      0 : 17 : 50
    </div>
  </footer>
);

const App = () => {
  return (
    <div className="flex min-h-screen flex-col bg-[#f0f0f0]">
      <TitleBar />
      <MenuBar />
      <ToolBar />
      <div className="flex flex-1">
        <main className="min-w-0 flex-1 border-t-2 border-r border-b-2 border-l-2 border-t-[#7d8488] border-r-white border-b-white border-l-[#8a9496] bg-[#374f5b]">
          <section className="pr-[10px] pl-[6px]">
            <h2
              className={`${SERIF} ${TITLE} pr-[118px] pb-[2px] text-center text-[31px] leading-[30px]`}
            >
              ЗАЩИТЫ ДЕЙСТВУЮЩИЕ НА ОСТАНОВ КОТЛА
            </h2>
            <StopTable />
          </section>

          <div className="flex pr-[33px] pl-[47px]">
            <section className="flex-[931] pt-[35px]">
              <h2
                className={`${SERIF} ${TITLE} pr-[55px] text-center text-[31px] leading-[33px]`}
              >
                ЗАЩИТЫ ДЕЙСТВУЮЩИЕ
                <br />
                НА РАЗГРУЗКУ КОТЛА
              </h2>
              <div className="relative flex items-start border-t-2 border-[#7d8a90] pt-[8px] pr-[6px] pl-[4px]">
                <span className="absolute top-0 left-0 h-[11px] w-px bg-[#7d8a90]" />
                <div className="flex-[5]">
                  <UnloadTable />
                </div>
                <div className="flex-[1]">
                  <h3
                    className={`${RAISED} ${SANS} flex h-[50px] items-center justify-center pb-1 text-[21px] font-bold text-[#0e625a]`}
                  >
                    Разгрузка
                  </h3>
                  <ul>
                    <ListCell h="h-[48px]" text={"Разгрузка\nкотла"} />
                    <ListCell h="h-[48px]" text={"Останов\nгорелки №2"} />
                    <ListCell h="h-[49px]" text={"Останов\nгорелки №5"} />
                  </ul>
                </div>
              </div>
            </section>

            <section className="ml-[16px] flex-[502]">
              <div className="flex items-start justify-between pr-[81px] pl-[14px]">
                <DrainColumn />
                <BoilerStopColumn />
              </div>
              <div className="mt-5 flex items-start justify-between">
                <ResetButton />
                <ProtectionKey />
              </div>
            </section>

            <section className="ml-[50px] flex flex-[186] flex-col gap-[5px] pt-[35px]">
              {meters.map((meter) => (
                <Meter key={meter.label} meter={meter} />
              ))}
            </section>
          </div>
        </main>
        <Sidebar />
      </div>
      <div className="h-[9px]" />
      <EventLog />
      <div className="h-[5px] border-b-2 border-[#4f9aa6] bg-[#f4f4f4]" />
    </div>
  );
};

export default App;
